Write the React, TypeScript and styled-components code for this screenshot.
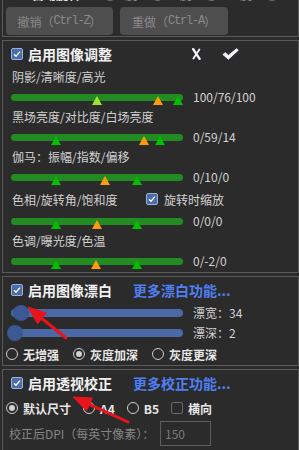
import React from "react";
import styled, { createGlobalStyle } from "styled-components";

const GlobalStyle = createGlobalStyle`
  html, body {
    margin: 0;
    padding: 0;
    background: #2b2b2b;
    overflow: hidden;
  }
  body {
    font-family: "Noto Sans CJK SC", "Noto Sans", sans-serif;
    color: #d2d2d2;
  }
`;

const Viewport = styled.div`
  position: relative;
  width: 299px;
  height: 450px;
  overflow: hidden;
  background: #2b2b2b;
`;

const Stack = styled.div`
  display: flex;
  flex-direction: column;
  gap: 3px;
  margin-top: -14px;
`;

const Panel = styled.section<{ $bottomPad?: number }>`
  margin-left: 2px;
  border: 1px solid #5a5a5a;
  display: flex;
  flex-direction: column;
  padding-bottom: ${({ $bottomPad }) => $bottomPad ?? 0}px;
`;

/* row that is scrolled mostly out of view */
const CutRow = styled.div`
  height: 20px;
  box-sizing: border-box;
  padding: 0 0 0 3px;
  display: flex;
  align-items: flex-start;
  gap: 14px;
  font-size: 12px;
  line-height: 15px;
  color: #9a9a9a;
  white-space: nowrap;
`;

const CutLabel = styled.span`
  color: #f0f0f0;
  font-weight: bold;
  margin-right: 10px;
`;

const ButtonRow = styled.div`
  display: flex;
  gap: 7px;
  padding: 0 0 1px 3px;
`;

const UndoButton = styled.button<{ $w: number }>`
  width: ${({ $w }) => $w}px;
  height: 28px;
  border: none;
  border-radius: 4px;
  background: #4e4e4e;
  color: #8a8a8a;
  font-family: "Noto Sans CJK SC", sans-serif;
  font-size: 12px;
  padding: 0;
  display: flex;
  align-items: center;
  justify-content: center;
`;

const Mono = styled.span`
  font-family: "Liberation Mono", monospace;
  letter-spacing: -1.2px;
`;

const TitleRow = styled.div`
  height: 26px;
  display: flex;
  align-items: center;
  padding-left: 8px;
`;

const Box = styled.span<{ $checked?: boolean }>`
  box-sizing: border-box;
  width: 12px;
  height: 12px;
  border-radius: 2px;
  flex: none;
  display: grid;
  place-items: center;
  border: 1px solid ${({ $checked }) => ($checked ? "#9db0d8" : "#6a6a6a")};
  background: ${({ $checked }) => ($checked ? "#4a6caa" : "transparent")};
`;

const Title = styled.span`
  margin-left: 5px;
  font-size: 14px;
  font-weight: bold;
  color: #f2f2f2;
  line-height: 20px;
`;

const MoreLink = styled.span`
  margin-left: 21px;
  font-size: 14px;
  font-weight: bold;
  color: #4f7ff2;
  line-height: 20px;
`;

const ActionIcons = styled.div`
  margin-left: auto;
  margin-right: 59px;
  display: flex;
  align-items: center;
  gap: 21px;
`;

const Caption = styled.div`
  height: 20px;
  padding-left: 9px;
  font-size: 12px;
  line-height: 20px;
  color: #d2d2d2;
`;

const CaptionWithOption = styled.div`
  height: 24px;
  padding-left: 9px;
  display: grid;
  grid-template-columns: 134px auto;
  align-items: center;
  font-size: 12px;
  color: #d2d2d2;
`;

const InlineCheck = styled.span`
  display: flex;
  align-items: center;
  gap: 6px;
`;

const SliderRow = styled.div`
  height: 20px;
  display: flex;
  align-items: center;
  padding-left: 8px;
`;

const GreenTrack = styled.div`
  position: relative;
  width: 172px;
  height: 7px;
  border-radius: 4px;
  background: #228b22;
`;

const Marker = styled.span<{ $color: string }>`
  position: absolute;
  top: 2px;
  width: 0;
  height: 0;
  border-left: 5px solid transparent;
  border-right: 5px solid transparent;
  border-bottom: 9px solid ${({ $color }) => $color};
`;

const BlueTrack = styled.div`
  position: relative;
  width: 172px;
  height: 8px;
  border-radius: 4px;
  background: #4a69a6;
`;

const Knob = styled.span`
  position: absolute;
  top: -4px;
  width: 16px;
  height: 16px;
  border-radius: 50%;
  background: #3a5891;
`;

const Value = styled.span`
  margin-left: 10px;
  font-size: 12px;
  color: #d2d2d2;
  line-height: 16px;
`;

const OptionRow = styled.div<{ $gap: number; $h: number }>`
  height: ${({ $h }) => $h}px;
  display: flex;
  align-items: center;
  gap: ${({ $gap }) => $gap}px;
  padding-left: 3px;
`;

const Option = styled.span`
  display: flex;
  align-items: center;
  gap: 5px;
  font-size: 12px;
  font-weight: bold;
  color: #e6e6e6;
`;

const Radio = styled.span<{ $checked?: boolean }>`
  box-sizing: border-box;
  width: 12px;
  height: 12px;
  border-radius: 50%;
  border: 1px solid #cfcfcf;
  display: grid;
  place-items: center;
  flex: none;

  &::after {
    content: "";
    width: 6px;
    height: 6px;
    border-radius: 50%;
    background: ${({ $checked }) => ($checked ? "#d0d0d0" : "transparent")};
  }
`;

const DpiRow = styled.div`
  height: 26px;
  padding-left: 6px;
  display: grid;
  grid-template-columns: 151px 51px;
  align-items: center;
  font-size: 12px;
  color: #858585;
`;

const DpiField = styled.input`
  box-sizing: border-box;
  width: 51px;
  height: 25px;
  margin: 0;
  padding: 0 4px;
  border: 1px solid #5e5e5e;
  background: #2b2b2b;
  color: #7a7a7a;
  font-family: "Noto Sans CJK SC", sans-serif;
  font-size: 12px;
`;

const Annotations = styled.svg`
  position: absolute;
  left: 0;
  top: 0;
  pointer-events: none;
`;

const Tick = () => (
  <svg width="8" height="8" viewBox="0 0 8 8">
    <polyline points="1,4.2 3,6.2 7,1.6" fill="none" stroke="#fff" strokeWidth="1.4" />
  </svg>
);

const Check = ({ checked }: { checked?: boolean }) => (
  <Box $checked={checked}>{checked && <Tick />}</Box>
);

/* brush-style cancel mark */
const CancelIcon = () => (
  <svg width="9" height="12" viewBox="0 0 9 12">
    <path d="M1.2 1.2 L7.6 10.8" stroke="#f4f6fb" strokeWidth="2.4" strokeLinecap="round" />
    <path d="M7.4 1.4 L1.4 10.6" stroke="#f4f6fb" strokeWidth="1.8" strokeLinecap="round" />
  </svg>
);

/* heavy apply check mark */
const ApplyIcon = () => (
  <svg width="17" height="12" viewBox="0 0 17 12">
    <path
      d="M0.8 6.6 L3.4 4.6 L6.4 7.2 L14.6 0.6 L16.4 2.2 L6.4 11.4 Z"
      fill="#f4f6fb"
      stroke="#f4f6fb"
      strokeWidth="0.6"
      strokeLinejoin="round"
    />
  </svg>
);

type Mark = { at: number; color: string };

const LIME = "#a6e22e";
const ORANGE = "#ff9a0a";
const GREEN = "#00c000";

const adjustments: { caption: string; value: string; marks: Mark[]; option?: string }[] = [
  {
    caption: "阴影/清晰度/高光",
    value: "100/76/100",
    marks: [
      { at: 86, color: LIME },
      { at: 147, color: ORANGE },
      { at: 167, color: GREEN },
    ],
  },
  {
    caption: "黑场亮度/对比度/白场亮度",
    value: "0/59/14",
    marks: [
      { at: 45, color: GREEN },
      { at: 133, color: ORANGE },
      { at: 149, color: GREEN },
    ],
  },
  {
    caption: "伽马：振幅/指数/偏移",
    value: "0/10/0",
    marks: [
      { at: 45, color: GREEN },
      { at: 94, color: ORANGE },
      { at: 126, color: GREEN },
    ],
  },
  {
    caption: "色相/旋转角/饱和度",
    value: "0/0/0",
    option: "旋转时缩放",
    marks: [
      { at: 45, color: GREEN },
      { at: 86, color: ORANGE },
      { at: 126, color: GREEN },
    ],
  },
  {
    caption: "色调/曝光度/色温",
    value: "0/-2/0",
    marks: [
      { at: 45, color: GREEN },
      { at: 85, color: ORANGE },
      { at: 126, color: GREEN },
    ],
  },
];

const bleach = [
  { label: "漂宽：34", knob: 1.5 },
  { label: "漂深：2", knob: -4 },
];

const Arrow = ({ tail, base, head }: { tail: [number, number]; base: [number, number]; head: string }) => (
  <g fill="#e8141c" stroke="#e8141c">
    <line x1={tail[0]} y1={tail[1]} x2={base[0]} y2={base[1]} strokeWidth="3" strokeLinecap="round" />
    <polygon points={head} strokeWidth="1" strokeLinejoin="round" />
  </g>
);

export default function App() {
  return (
    <Viewport>
      <GlobalStyle />
      <Stack>
        <Panel>
          <CutRow>
            <Check checked />
            <CutLabel>自动旋转</CutLabel>
            <span>○ 0度</span>
            <span>○ 90度</span>
            <span>○ 180度</span>
            <span>○ 270度</span>
          </CutRow>
          <ButtonRow>
            <UndoButton $w={107}>
              撤销（<Mono>Ctrl-Z</Mono>）
            </UndoButton>
            <UndoButton $w={108}>
              重做（<Mono>Ctrl-A</Mono>）
            </UndoButton>
          </ButtonRow>
        </Panel>

        <Panel $bottomPad={1}>
          <TitleRow>
            <Check checked />
            <Title>启用图像调整</Title>
            <ActionIcons>
              <CancelIcon />
              <ApplyIcon />
            </ActionIcons>
          </TitleRow>
          {adjustments.map((a) => (
            <React.Fragment key={a.caption}>
              {a.option ? (
                <CaptionWithOption>
                  <span>{a.caption}</span>
                  <InlineCheck>
                    <Check checked />
                    {a.option}
                  </InlineCheck>
                </CaptionWithOption>
              ) : (
                <Caption>{a.caption}</Caption>
              )}
              <SliderRow>
                <GreenTrack>
                  {a.marks.map((m, i) => (
                    <Marker key={i} $color={m.color} style={{ left: m.at - 5 }} />
                  ))}
                </GreenTrack>
                <Value>{a.value}</Value>
              </SliderRow>
            </React.Fragment>
          ))}
        </Panel>

        <Panel>
          <TitleRow>
            <Check checked />
            <Title>启用图像漂白</Title>
            <MoreLink>更多漂白功能...</MoreLink>
          </TitleRow>
          {bleach.map((b) => (
            <SliderRow key={b.label}>
              <BlueTrack>
                <Knob style={{ left: b.knob }} />
              </BlueTrack>
              <Value>{b.label}</Value>
            </SliderRow>
          ))}
          <OptionRow $gap={14} $h={22}>
            <Option>
              <Radio />
              无增强
            </Option>
            <Option>
              <Radio $checked />
              灰度加深
            </Option>
            <Option>
              <Radio />
              灰度更深
            </Option>
          </OptionRow>
        </Panel>

        <Panel $bottomPad={30}>
          <TitleRow>
            <Check checked />
            <Title>启用透视校正</Title>
            <MoreLink>更多校正功能...</MoreLink>
          </TitleRow>
          <OptionRow $gap={12} $h={24}>
            <Option>
              <Radio $checked />
              默认尺寸
            </Option>
            <Option>
              <Radio />
              A4
            </Option>
            <Option>
              <Radio />
              B5
            </Option>
            <Option>
              <Check />
              横向
            </Option>
          </OptionRow>
          <DpiRow>
            <span>校正后DPI（每英寸像素）：</span>
            <DpiField defaultValue="150" disabled />
          </DpiRow>
        </Panel>
      </Stack>

      <Annotations width="299" height="450" viewBox="0 0 299 450">
        <Arrow tail={[66, 338]} base={[42, 318.5]} head="28,307 46.4,313 37.6,323.8" />
        <Arrow tail={[128, 422]} base={[89.4, 404.4]} head="73,397 92.3,398 86.5,410.8" />
      </Annotations>
    </Viewport>
  );
}
